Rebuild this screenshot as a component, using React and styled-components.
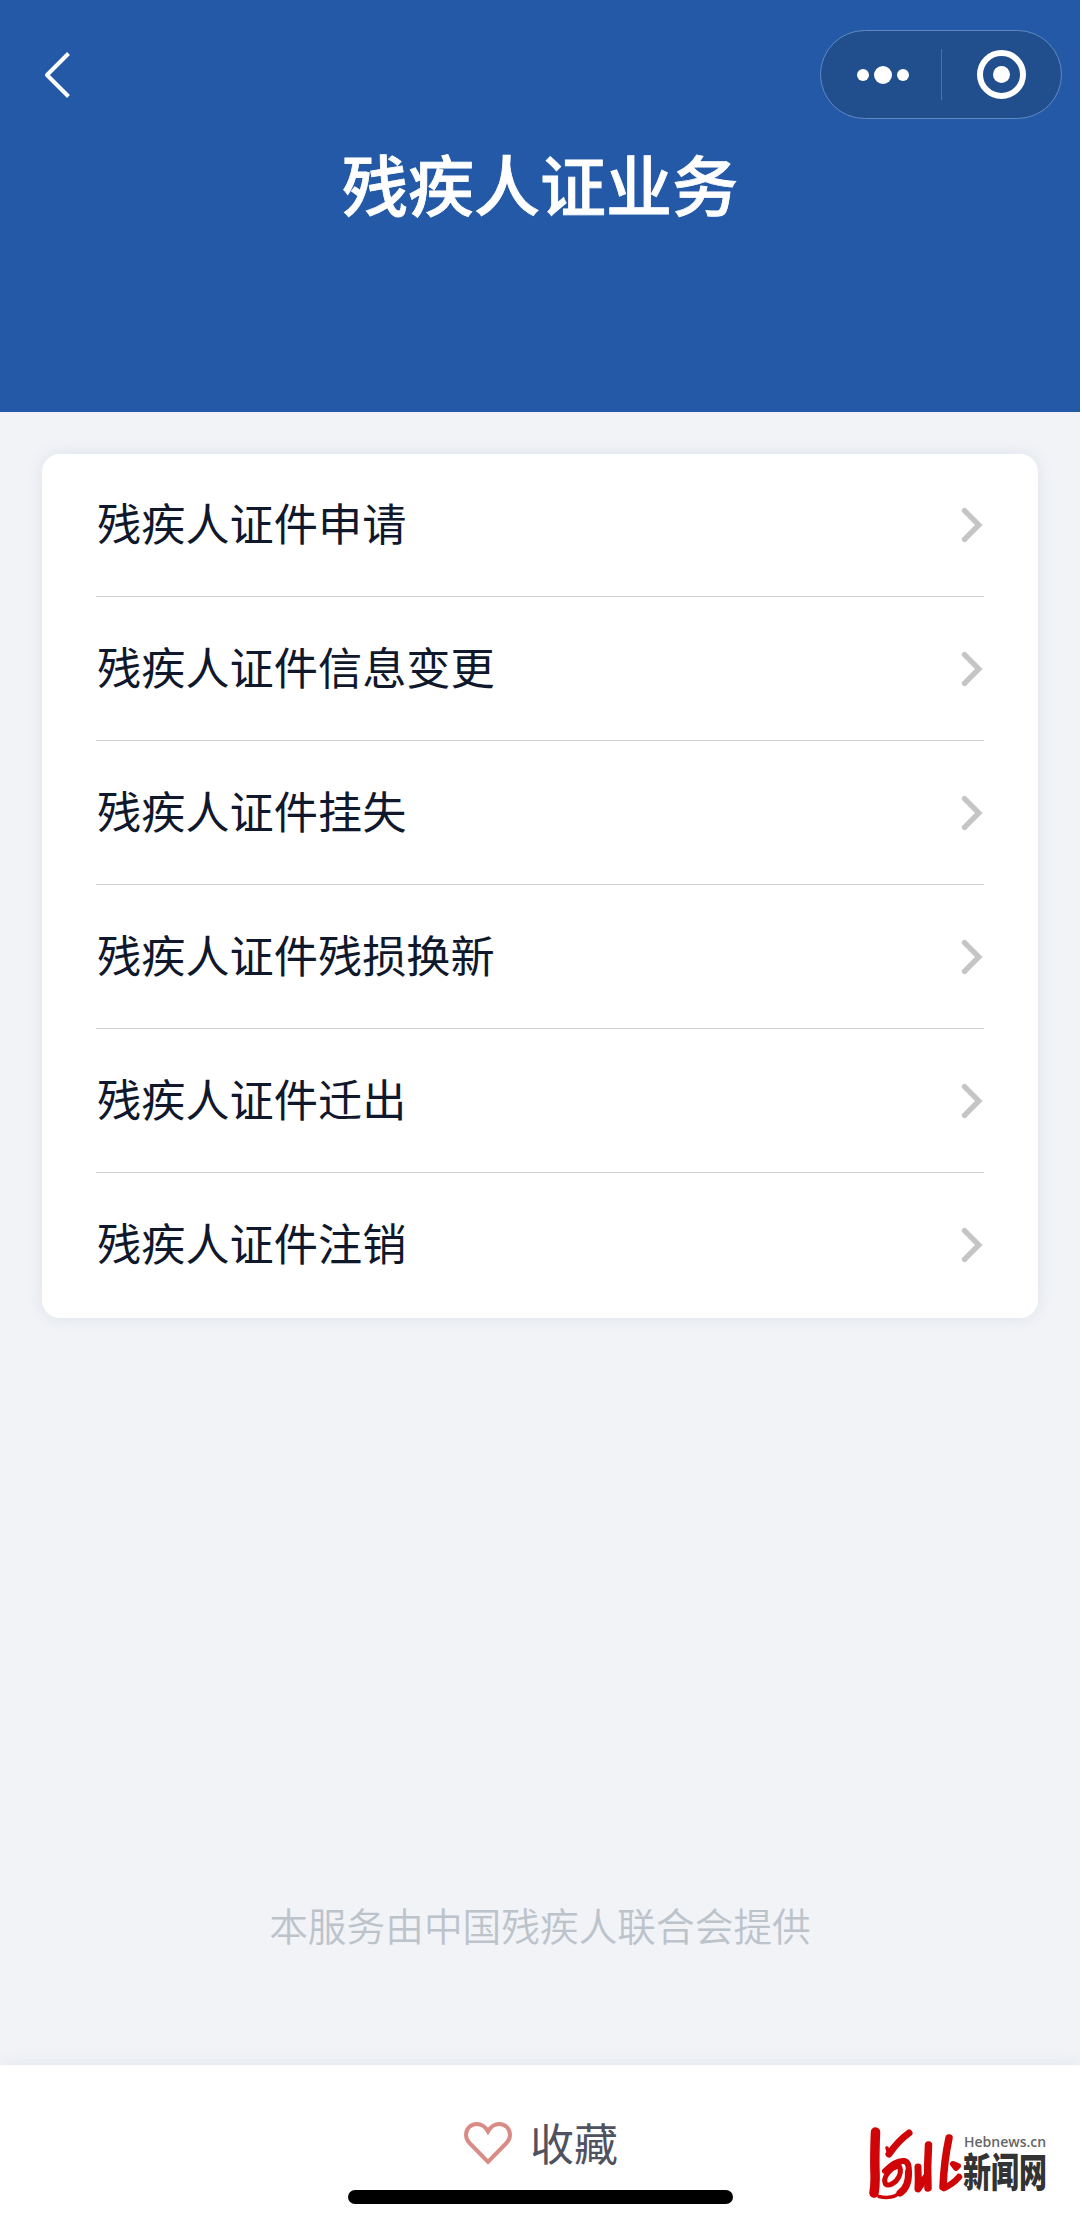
import React from 'react';
import styled, { createGlobalStyle } from 'styled-components';

const services = [
    '残疾人证件申请',
    '残疾人证件信息变更',
    '残疾人证件挂失',
    '残疾人证件残损换新',
    '残疾人证件迁出',
    '残疾人证件注销',
];

const GlobalStyle = createGlobalStyle`
    * {
        box-sizing: border-box;
    }

    body {
        margin: 0;
        background: #fff;
        font-family: "Noto Sans CJK SC", sans-serif;
    }
`;

const Screen = styled.div`
    display: flex;
    flex-direction: column;
    width: 1080px;
    height: 2229px;
    overflow: hidden;
    background: #f1f3f7;
`;

const Header = styled.header`
    flex: none;
    height: 412px;
    background: #2359a6;
`;

const Toolbar = styled.div`
    display: flex;
    align-items: center;
    justify-content: space-between;
    height: 149px;
    padding: 0 18px 0 40px;
`;

const BackButton = styled.button`
    display: flex;
    padding: 0;
    border: 0;
    background: none;
`;

const Capsule = styled.div`
    display: flex;
    align-items: center;
    width: 242px;
    height: 89px;
    border: 1px solid #5f8ac4;
    border-radius: 45px;
    background: #214f8d;
`;

const CapsuleHalf = styled.div`
    display: flex;
    flex: 1 1 50%;
    align-items: center;
    justify-content: center;
    gap: 5px;
    padding-left: ${props => props.$inset || 0}px;
`;

const CapsuleLine = styled.div`
    flex: none;
    width: 1px;
    height: 51px;
    background: #4673ae;
`;

const Dot = styled.span`
    width: ${props => props.$size}px;
    height: ${props => props.$size}px;
    border-radius: 50%;
    background: #fff;
`;

const Ring = styled.span`
    display: flex;
    align-items: center;
    justify-content: center;
    width: 49px;
    height: 49px;
    border: 6px solid #fff;
    border-radius: 50%;
`;

const Title = styled.h1`
    margin: 0;
    color: #fff;
    font-size: 66px;
    font-weight: 500;
    line-height: 67px;
    text-align: center;
    -webkit-text-stroke: 0.8px #fff;
`;

const Content = styled.main`
    display: flex;
    flex: 1;
    flex-direction: column;
    justify-content: space-between;
    padding: 42px 42px 111px;
`;

const Card = styled.ul`
    margin: 0;
    padding: 0 54px;
    border-radius: 18px;
    background: #fff;
    box-shadow: 0 0 16px rgba(60, 80, 120, 0.1);
    list-style: none;
`;

const Row = styled.li`
    display: flex;
    align-items: center;
    justify-content: space-between;
    height: 144px;
    padding: 0 1px;
    border-bottom: 1px solid #d0d2d6;
    color: #10182b;

    &:first-child {
        height: 143px;
    }

    &:last-child {
        height: 145px;
        padding-bottom: 2px;
        border-bottom: 0;
    }
`;

const RowName = styled.span`
    padding-bottom: 6px;
    font-size: 44.2px;
    line-height: 60px;
`;

const Provider = styled.p`
    margin: 0;
    color: #bcc3cb;
    font-size: 38.7px;
    font-weight: 350;
    line-height: 60px;
    text-align: center;
`;

const Footer = styled.footer`
    display: grid;
    flex: none;
    grid-template-columns: 1fr auto 1fr;
    grid-template-rows: 125px 14px;
    height: 164px;
    background: #fff;
    box-shadow: 0 0 16px rgba(60, 80, 120, 0.08);
`;

const Favorite = styled.button`
    display: flex;
    grid-column: 2;
    align-items: center;
    justify-content: center;
    gap: 18px;
    padding: 32px 0 0 2px;
    border: 0;
    background: none;
    color: #50525f;
    font-family: inherit;
    font-size: 44px;
    line-height: 60px;
`;

const FavoriteText = styled.span`
    padding-bottom: 4px;
`;

const HomeIndicator = styled.div`
    grid-row: 2;
    grid-column: 2;
    width: 385px;
    height: 14px;
    border-radius: 7px;
    background: #000;
`;

const Brand = styled.div`
    display: flex;
    grid-row: 1 / 3;
    grid-column: 3;
    justify-content: flex-end;
    padding: 62px 33px 0 0;
`;

const BrandText = styled.div`
    display: flex;
    flex-direction: column;
    width: 84px;
    padding-top: 7px;
    color: #333;
`;

const BrandUrl = styled.span`
    padding-left: 1px;
    color: #666;
    font-family: "Open Sans", sans-serif;
    font-size: 14px;
    font-weight: 600;
    line-height: 16px;
`;

const BrandName = styled.span`
    font-size: 40px;
    font-weight: 900;
    line-height: 40px;
    white-space: nowrap;
    transform: scaleX(0.7);
    transform-origin: left;
`;

const BackIcon = () => (
    <svg width="36" height="52" viewBox="0 0 36 52" fill="none">
        <path d="M28.5 4.5 7 26l21.5 21.5" stroke="#fff" strokeWidth="4" strokeLinejoin="round" />
    </svg>
);

const Arrow = () => (
    <svg width="22" height="36" viewBox="0 0 22 36" fill="none">
        <path d="M3.5 3.7 17.8 18 3.5 32.3" stroke="#c5c5c7" strokeWidth="5.4" strokeLinecap="round" />
    </svg>
);

const Heart = () => (
    <svg width="48" height="44" viewBox="0 0 48 44" fill="none">
        <path d="M24 9.5C21.5 5 17.5 2 12.7 2C6.7 2 2 6.7 2 12.8C2 16 3.5 19 5.5 21L24 40L42.5 21C44.5 19 46 16 46 12.8C46 6.7 41.3 2 35.3 2C30.5 2 26.5 5 24 9.5Z" stroke="#d98c86" strokeWidth="4" />
    </svg>
);

// brush mark beside the site name
const BrushMark = () => (
    <svg width="94" height="74" viewBox="0 0 94 74" fill="none" stroke="#cf0508" strokeLinecap="round" strokeLinejoin="round">
        <path d="M6.5 5Q5.5 30 6 45Q6.5 58 5 66" strokeWidth="9.5" />
        <path d="M40 6Q29 14 20 27" strokeWidth="7" />
        <path d="M20 27L18 21" strokeWidth="3.5" />
        <path d="M16 44Q27 33 35 34Q41 35 39.5 47" strokeWidth="6" />
        <path d="M39.5 45Q40 60 31 66" strokeWidth="7" />
        <path d="M33 64Q24 73 10 69.5" strokeWidth="3.5" />
        <path d="M30 38Q34 46 27 54Q20 60 16.5 57Q14 52 19 46Q23 41 29 39" strokeWidth="5" />
        <path d="M49 40Q49.5 52 49 62L57 50" strokeWidth="7" />
        <path d="M59.5 18Q58 40 59 61" strokeWidth="7.5" />
        <path d="M80 11Q75 34 74 60" strokeWidth="7.5" />
        <path d="M75 61Q84 57 90 50" strokeWidth="6.5" />
        <path d="M84 37L89 39L87 41Z" strokeWidth="6" />
    </svg>
);

const App = () => {
    return (
        <>
            <GlobalStyle />
            <Screen>
                <Header>
                    <Toolbar>
                        <BackButton aria-label="返回"><BackIcon /></BackButton>
                        <Capsule>
                            <CapsuleHalf $inset={5}>
                                <Dot $size={12} />
                                <Dot $size={18} />
                                <Dot $size={12} />
                            </CapsuleHalf>
                            <CapsuleLine />
                            <CapsuleHalf>
                                <Ring><Dot $size={17} /></Ring>
                            </CapsuleHalf>
                        </Capsule>
                    </Toolbar>
                    <Title>残疾人证业务</Title>
                </Header>

                <Content>
                    <Card>
                        {services.map(name => (
                            <Row key={name}>
                                <RowName>{name}</RowName>
                                <Arrow />
                            </Row>
                        ))}
                    </Card>
                    <Provider>本服务由中国残疾人联合会提供</Provider>
                </Content>

                <Footer>
                    <Favorite><Heart /><FavoriteText>收藏</FavoriteText></Favorite>
                    <HomeIndicator />
                    <Brand>
                        <BrushMark />
                        <BrandText>
                            <BrandUrl>Hebnews.cn</BrandUrl>
                            <BrandName>新闻网</BrandName>
                        </BrandText>
                    </Brand>
                </Footer>
            </Screen>
        </>
    );
};

export default App;
